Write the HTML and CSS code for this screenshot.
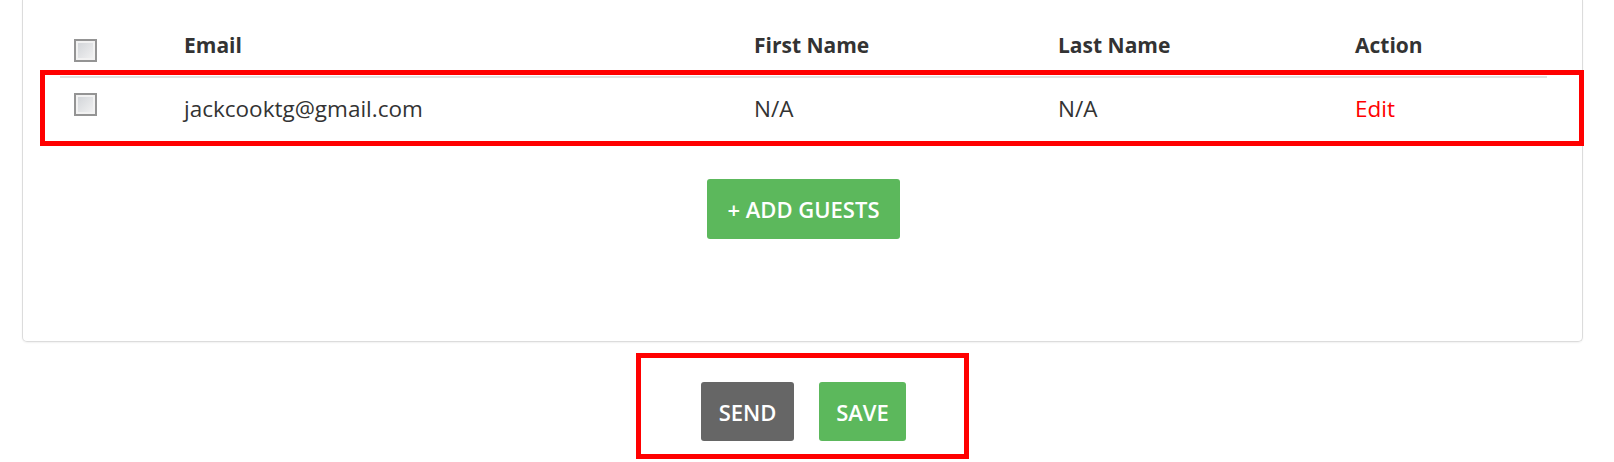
FILE: index.html
```html
<!DOCTYPE html>
<html>
<head>
    <meta charset="UTF-8">
    <title>Guests</title>
    <link rel="stylesheet" href="styles.css">
</head>
<body>
    <div class="page">
        <div class="card">
            <div class="guest-table">
                <div class="row head">
                    <div class="cell cell-check"><span class="checkbox"></span></div>
                    <div class="cell">Email</div>
                    <div class="cell">First Name</div>
                    <div class="cell">Last Name</div>
                    <div class="cell">Action</div>
                </div>
                <div class="row guest highlight">
                    <div class="cell cell-check"><span class="checkbox"></span></div>
                    <div class="cell">jackcooktg@gmail.com</div>
                    <div class="cell">N/A</div>
                    <div class="cell">N/A</div>
                    <div class="cell"><a class="edit-link" href="#">Edit</a></div>
                </div>
            </div>
            <div class="add-wrap">
                <button class="btn btn-green btn-add">+ ADD GUESTS</button>
            </div>
        </div>
        <div class="actions">
            <div class="actions-box">
                <button class="btn btn-grey btn-send">SEND</button>
                <button class="btn btn-green btn-save">SAVE</button>
            </div>
        </div>
    </div>
</body>
</html>
```

FILE: styles.css
```css
/* page base */
body {
    margin: 0;
    background: #fff;
    font-family: "Open Sans", Arial, sans-serif;
    font-size: 22.5px;
    color: #333;
}

.page {
    width: 1561px;
    padding-left: 22px;
}

/* white panel, top is cut off by the screenshot */
.card {
    height: 342px;
    box-sizing: border-box;
    border: 1px solid #dcdcdc;
    border-top: none;
    border-radius: 0 0 5px 5px;
    box-shadow: 0 1px 2px rgba(0, 0, 0, 0.06);
    padding: 0 35px 0 37px;
}

.guest-table {
    display: flex;
    flex-direction: column;
}

.row {
    display: grid;
    grid-template-columns: 110px 570px 304px 297px 1fr;
    line-height: 26px;
}

.cell {
    padding-left: 14px;
}

.head {
    height: 76px;
    border-bottom: 2px solid #e1e1e1;
    font-weight: bold;
    font-size: 21px;
}

.head .cell {
    padding-top: 32px;
}

.head .cell-check {
    padding-top: 39px;
}

.guest {
    height: 63px;
}

.guest .cell {
    padding-top: 18px;
}

.guest .cell-check {
    padding-top: 15px;
}

/* red annotation frame drawn over the row */
.highlight {
    position: relative;
}

.highlight::after {
    content: "";
    position: absolute;
    left: -20px;
    right: -37px;
    top: -8px;
    bottom: -5px;
    border: 5px solid #ff0000;
}

.checkbox {
    display: block;
    width: 19px;
    height: 19px;
    border: 2px solid #949494;
    background: linear-gradient(135deg, #cfd2d6, #f4f4f4);
    box-shadow: inset 0 0 0 2px #f2f2f2;
}

.edit-link {
    color: #ff0000;
    text-decoration: none;
}

/* buttons */
.btn {
    border: none;
    border-radius: 3px;
    color: #fff;
    font-family: "Open Sans", Arial, sans-serif;
    font-size: 22px;
    font-weight: 600;
    cursor: pointer;
}

.btn-green {
    background-color: #5cb85c;
}

.btn-grey {
    background-color: #666;
}

.add-wrap {
    display: flex;
    justify-content: center;
    padding-top: 38px;
}

.btn-add {
    width: 193px;
    height: 60px;
}

.actions {
    display: flex;
    justify-content: center;
    padding-top: 11px;
}

.actions-box {
    display: flex;
    gap: 25px;
    border: 5px solid #ff0000;
    padding: 24px 58px 13px 60px;
}

.btn-send {
    width: 93px;
    height: 59px;
}

.btn-save {
    width: 87px;
    height: 59px;
}
```
